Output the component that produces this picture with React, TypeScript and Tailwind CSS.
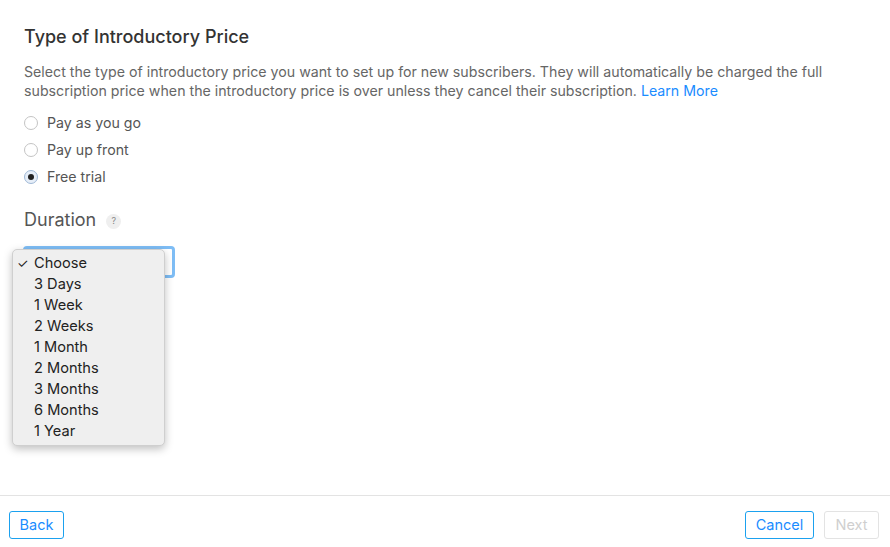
import React from "react";

const items = ["Choose", "3 Days", "1 Week", "2 Weeks", "1 Month", "2 Months", "3 Months", "6 Months", "1 Year"];

function Radio({ label, checked }: { label: string; checked?: boolean }) {
  return (
    <div className="flex items-center h-[27px]">
      <span
        className={
          "w-[14px] h-[14px] rounded-full border flex items-center justify-center " +
          (checked ? "border-[#9fb8d6] bg-[#e6eef8]" : "border-[#c4c4c4] bg-white")
        }
      >
        {checked && <span className="w-[6px] h-[6px] rounded-full bg-[#222]" />}
      </span>
      <span className="ml-[9px] text-[14.2px] text-[#555]">{label}</span>
    </div>
  );
}

export default function App() {
  return (
    <div className="w-[890px] h-[547px] bg-white flex flex-col" style={{ fontFamily: "Inter, 'Liberation Sans', sans-serif" }}>
      <div className="flex-1 px-[24px] pt-[26px]">
        <h1 className="text-[18px] font-medium text-[#333] leading-[22px]">Type of Introductory Price</h1>
        <p className="mt-[14px] text-[14.2px] leading-[19px] text-[#666] w-[840px]">
          Select the type of introductory price you want to set up for new subscribers. They will automatically be charged the full subscription price when the introductory price is over unless they cancel their subscription.{" "}
          <a className="text-[#1a8cff]">Learn More</a>
        </p>
        <div className="mt-[9px] flex flex-col">
          <Radio label="Pay as you go" />
          <Radio label="Pay up front" />
          <Radio label="Free trial" checked />
        </div>
        <div className="mt-[19px] flex items-center">
          <span className="text-[18px] text-[#555] leading-[22px]">Duration</span>
          <span className="ml-[10px] mt-[2px] w-[15px] h-[15px] rounded-full bg-[#efefef] text-[#888] text-[9px] flex items-center justify-center">?</span>
        </div>
        <div className="relative mt-[15px] -ml-[1px]">
          <div className="w-[152px] h-[32px] rounded-[4px] border-[3px] border-[#7ebdf5] bg-white" />
          <div className="absolute left-[-11px] top-[3px] w-[153px] rounded-[5px] bg-[#efefef] border border-[#cfcfcf] shadow-[0_3px_8px_rgba(0,0,0,0.25)] pt-[3px] pb-[3px]">
            {items.map((it, i) => (
              <div key={it} className="h-[21px] flex items-center text-[14.6px] text-[#222]">
                <span className="w-[21px] pl-[4px] text-[13px]">{i === 0 ? "✓" : ""}</span>
                <span>{it}</span>
              </div>
            ))}
          </div>
        </div>
      </div>
      <div className="border-t border-[#e3e3e3] h-[52px] flex items-center justify-between pl-[9px] pr-[11px] pt-[7px]">
        <button className="h-[28px] w-[55px] rounded-[3px] border border-[#1ba1ef] text-[#1a8cff] text-[14.5px]">Back</button>
        <div className="flex gap-[10px]">
          <button className="h-[28px] w-[69px] rounded-[3px] border border-[#1ba1ef] text-[#1a8cff] text-[14.5px]">Cancel</button>
          <button className="h-[28px] w-[55px] rounded-[3px] border border-[#e3e3e3] text-[#cfcfcf] text-[14.5px]">Next</button>
        </div>
      </div>
    </div>
  );
}
